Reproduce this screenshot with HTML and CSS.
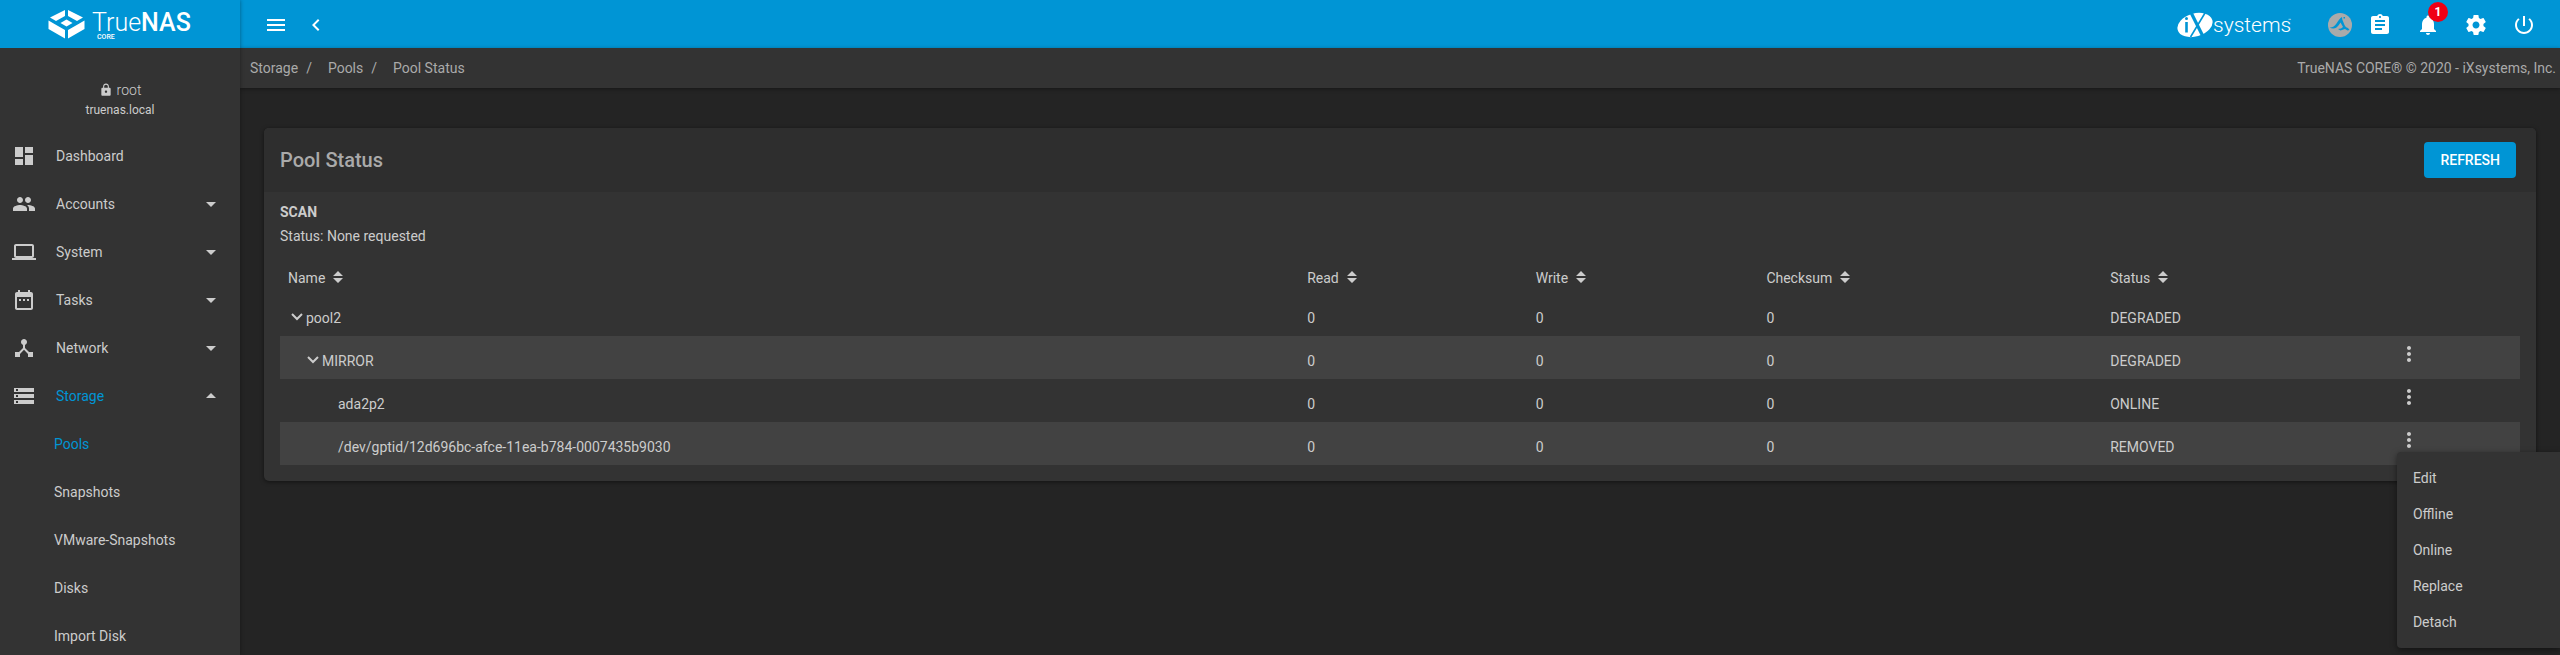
FILE: index.html
```html
<!DOCTYPE html>
<html lang="en">
<head>
<meta charset="utf-8">
<title>TrueNAS - Pool Status</title>
<link rel="stylesheet" href="styles.css">
</head>
<body>
<div class="shell">
  <aside class="sidebar">
    <a class="brand" href="#" aria-label="TrueNAS CORE">
      <svg class="brand-logo" viewBox="0 0 144 36" aria-hidden="true">
        <g fill="#fff">
          <path d="M17 4v6l-9 5-6-3.500z"/>
          <path d="M20 4v6l9 5 6-3.500z"/>
          <path d="M18.500 13.500l6 3.500-6 3.500-6-3.500z"/>
          <path d="M0.500 14.500l6 3.500 10.500 6v8.500l-16.500-9.500z"/>
          <path d="M36.500 14.500l-6 3.500-10.500 6v8.500l16.500-9.500z"/>
        </g>
        <text class="brand-name" x="44" y="25">True<tspan class="brand-strong">NAS</tspan></text>
        <text class="brand-edition" x="49" y="33">CORE</text>
      </svg>
    </a>
    <div class="user">
      <div class="user-name"><svg class="lock" viewBox="0 0 24 24"><path d="M18 8h-1V6c0-2.760-2.240-5-5-5S7 3.240 7 6v2H6c-1.100 0-2 .9-2 2v10c0 1.100.9 2 2 2h12c1.100 0 2-.9 2-2V10c0-1.100-.9-2-2-2zm-6 9c-1.100 0-2-.9-2-2s.9-2 2-2 2 .9 2 2-.9 2-2 2zm3.100-9H8.900V6c0-1.710 1.390-3.100 3.100-3.100s3.100 1.390 3.100 3.100z"/></svg>root</div>
      <div class="user-host">truenas.local</div>
    </div>
    <nav class="nav">
      <a class="nav-item" href="#"><svg class="icon" viewBox="0 0 24 24"><path d="M3 13h8V3H3zm0 8h8v-6H3zm10 0h8V11h-8zm0-18v6h8V3z"/></svg><span class="nav-label">Dashboard</span></a>
      <a class="nav-item" href="#"><svg class="icon" viewBox="0 0 24 24"><path d="M16 11c1.660 0 2.990-1.340 2.990-3S17.660 5 16 5s-3 1.340-3 3 1.340 3 3 3zm-8 0c1.660 0 2.990-1.340 2.990-3S9.660 5 8 5 5 6.340 5 8s1.340 3 3 3zm0 2c-2.330 0-7 1.170-7 3.500V19h14v-2.500C15 14.170 10.330 13 8 13zm8 0c-.29 0-.62.02-.97.05 1.160.84 1.970 1.970 1.970 3.450V19h6v-2.500c0-2.330-4.670-3.500-7-3.500z"/></svg><span class="nav-label">Accounts</span><svg class="icon" viewBox="0 0 24 24"><path d="M7 10l5 5 5-5z"/></svg></a>
      <a class="nav-item" href="#"><svg class="icon" viewBox="0 0 24 24"><path d="M20 18c1.100 0 1.990-.9 1.990-2L22 6c0-1.100-.9-2-2-2H4c-1.100 0-2 .9-2 2v10c0 1.100.9 2 2 2H0v2h24v-2zM4 6h16v10H4z"/></svg><span class="nav-label">System</span><svg class="icon" viewBox="0 0 24 24"><path d="M7 10l5 5 5-5z"/></svg></a>
      <a class="nav-item" href="#"><svg class="icon" viewBox="0 0 24 24"><path d="M9 11H7v2h2zm4 0h-2v2h2zm4 0h-2v2h2zm2-7h-1V2h-2v2H8V2H6v2H5c-1.110 0-1.990.9-1.990 2L3 20c0 1.100.89 2 2 2h14c1.100 0 2-.9 2-2V6c0-1.100-.9-2-2-2zm0 16H5V9h14z"/></svg><span class="nav-label">Tasks</span><svg class="icon" viewBox="0 0 24 24"><path d="M7 10l5 5 5-5z"/></svg></a>
      <a class="nav-item" href="#"><svg class="icon" viewBox="0 0 24 24"><path d="M17 16l-4-4V8.820C14.160 8.400 15 7.300 15 6c0-1.660-1.340-3-3-3S9 4.340 9 6c0 1.300.84 2.400 2 2.820V12l-4 4H3v5h5v-3.050l4-4.200 4 4.200V21h5v-5z"/></svg><span class="nav-label">Network</span><svg class="icon" viewBox="0 0 24 24"><path d="M7 10l5 5 5-5z"/></svg></a>
      <a class="nav-item" href="#"><svg class="icon" viewBox="0 0 24 24"><path d="M2 20h20v-4H2zm2-3h2v2H4zM2 4v4h20V4zm4 3H4V5h2zm-4 7h20v-4H2zm2-3h2v2H4z"/></svg><span class="nav-label active">Storage</span><svg class="icon" viewBox="0 0 24 24"><path d="M7 14l5-5 5 5z"/></svg></a>
      <a class="nav-sub active" href="#">Pools</a>
      <a class="nav-sub" href="#">Snapshots</a>
      <a class="nav-sub" href="#">VMware-Snapshots</a>
      <a class="nav-sub" href="#">Disks</a>
      <a class="nav-sub" href="#">Import Disk</a>
    </nav>
  </aside>

  <div class="main">
    <header class="topbar">
      <div class="topbar-group">
        <button class="icon-btn" aria-label="Toggle menu"><svg class="icon" viewBox="0 0 24 24"><path d="M3 18h18v-2H3zm0-5h18v-2H3zm0-7v2h18V6z"/></svg></button>
        <button class="icon-btn" aria-label="Collapse menu"><svg class="icon" viewBox="0 0 24 24"><path d="M15.410 7.410L14 6l-6 6 6 6 1.410-1.410L10.830 12z"/></svg></button>
      </div>
      <div class="topbar-group topbar-end">
        <svg class="vendor" viewBox="0 0 120 32" role="img" aria-label="iXsystems">
          <ellipse cx="19" cy="16" rx="18" ry="11.500" fill="#fff" transform="rotate(-16 19 16)"/>
          <g fill="none" stroke="#0095d5">
            <path d="M10.500 13v10.500" stroke-width="2.600"/>
            <path d="M15.500 4.500L27 27.500" stroke-width="3.200"/>
            <path d="M29 4L14.500 28" stroke-width="1.600"/>
          </g>
          <circle cx="10.500" cy="9.500" r="1.500" fill="#0095d5"/>
          <text class="vendor-name" x="37" y="23">systems</text>
          <text class="vendor-tm" x="112" y="13">™</text>
        </svg>
        <button class="icon-btn truecommand" aria-label="TrueCommand"><svg class="icon" viewBox="0 0 24 24"><circle cx="12" cy="12" r="12" fill="#aaa"/><path d="M1.500 14.500c3 .2 5-1 7-4 1.500-2.500 3-5 5.500-6.500l.3 2.500 2 5c.8 2 1.600 2.800 3.700 3.500l1.500 2-2 .6-2.500-1.600-4.500 1.500-2.500-1.500 3-.6 2-1.400-2.500-4.500c-1.500 2-2 3.500-4 5-2 1.400-4.500 1.400-7 0zM15.500 4h1.500v1.500h-1.500z" fill="#0095d5"/></svg></button>
        <button class="icon-btn tasks" aria-label="Task manager"><svg class="icon" viewBox="0 0 24 24"><path d="M19 3h-4.180C14.400 1.840 13.300 1 12 1s-2.400.84-2.820 2H5c-1.100 0-2 .9-2 2v14c0 1.100.9 2 2 2h14c1.100 0 2-.9 2-2V5c0-1.100-.9-2-2-2zm-7 0c.55 0 1 .45 1 1s-.45 1-1 1-1-.45-1-1 .45-1 1-1zm2 14H7v-2h7zm3-4H7v-2h10zm0-4H7V7h10z"/></svg></button>
        <button class="icon-btn" aria-label="Notifications, 1 new"><svg class="icon" viewBox="0 0 24 24"><path d="M12 22c1.100 0 2-.9 2-2h-4c0 1.100.89 2 2 2zm6-6v-5c0-3.070-1.640-5.640-4.500-6.320V4c0-.83-.67-1.500-1.500-1.500s-1.500.67-1.500 1.500v.68C7.630 5.360 6 7.920 6 11v5l-2 2v1h16v-1z"/></svg><span class="badge">1</span></button>
        <button class="icon-btn" aria-label="Settings"><svg class="icon" viewBox="0 0 24 24"><path d="M19.430 12.980c.04-.32.07-.64.07-.98s-.03-.66-.07-.98l2.110-1.650c.19-.15.24-.42.12-.64l-2-3.460c-.12-.22-.39-.3-.61-.22l-2.490 1c-.52-.4-1.080-.73-1.690-.98l-.38-2.650C14.460 2.180 14.250 2 14 2h-4c-.25 0-.46.18-.49.42l-.38 2.650c-.61.25-1.170.59-1.690.98l-2.490-1c-.23-.09-.49 0-.61.22l-2 3.460c-.13.22-.07.49.12.64l2.110 1.650c-.04.32-.07.65-.07.98s.03.66.07.98l-2.110 1.650c-.19.15-.24.42-.12.64l2 3.460c.12.22.39.3.61.22l2.490-1c.52.4 1.080.73 1.690.98l.38 2.650c.03.24.24.42.49.42h4c.25 0 .46-.18.49-.42l.38-2.650c.61-.25 1.170-.59 1.690-.98l2.490 1c.23.09.49 0 .61-.22l2-3.460c.12-.22.07-.49-.12-.64zM12 15.500c-1.930 0-3.500-1.570-3.500-3.500s1.570-3.500 3.500-3.500 3.500 1.570 3.500 3.500-1.570 3.500-3.500 3.500z"/></svg></button>
        <button class="icon-btn" aria-label="Power"><svg class="icon" viewBox="0 0 24 24"><path d="M13 3h-2v10h2zm4.830 2.170l-1.420 1.420C17.990 7.860 19 9.810 19 12c0 3.870-3.130 7-7 7s-7-3.130-7-7c0-2.190 1.010-4.140 2.580-5.420L6.170 5.170C4.230 6.820 3 9.260 3 12c0 4.970 4.030 9 9 9s9-4.030 9-9c0-2.740-1.230-5.180-3.170-6.830z"/></svg></button>
      </div>
    </header>

    <div class="crumbbar">
      <nav class="crumbs" aria-label="Breadcrumb">
        <a href="#">Storage</a><span class="sep">/</span>
        <a href="#">Pools</a><span class="sep">/</span>
        <a href="#">Pool Status</a>
      </nav>
      <div>TrueNAS CORE® © 2020 - iXsystems, Inc.</div>
    </div>

    <main class="content">
      <section class="card">
        <div class="card-head">
          <h1 class="card-title">Pool Status</h1>
          <button class="refresh">REFRESH</button>
        </div>
        <div class="card-body">
          <div class="scan-title">SCAN</div>
          <div class="scan-status">Status: None requested</div>
          <table class="pool-table">
            <colgroup><col class="c-name"><col class="c-read"><col class="c-write"><col class="c-sum"><col class="c-status"><col></colgroup>
            <thead>
              <tr>
                <th><button class="sort">Name<svg viewBox="0 0 10 12"><path d="M5 0l5 5H0zM0 7h10l-5 5z"/></svg></button></th>
                <th><button class="sort">Read<svg viewBox="0 0 10 12"><path d="M5 0l5 5H0zM0 7h10l-5 5z"/></svg></button></th>
                <th><button class="sort">Write<svg viewBox="0 0 10 12"><path d="M5 0l5 5H0zM0 7h10l-5 5z"/></svg></button></th>
                <th><button class="sort">Checksum<svg viewBox="0 0 10 12"><path d="M5 0l5 5H0zM0 7h10l-5 5z"/></svg></button></th>
                <th><button class="sort">Status<svg viewBox="0 0 10 12"><path d="M5 0l5 5H0zM0 7h10l-5 5z"/></svg></button></th>
                <th></th>
              </tr>
            </thead>
            <tbody>
              <tr>
                <td><div class="node"><button class="toggle" aria-label="Collapse pool2"><svg viewBox="0 0 12 8"><path d="M1 1l5 5 5-5"/></svg></button>pool2</div></td>
                <td>0</td><td>0</td><td>0</td><td>DEGRADED</td><td></td>
              </tr>
              <tr>
                <td><div class="node level-1"><button class="toggle" aria-label="Collapse MIRROR"><svg viewBox="0 0 12 8"><path d="M1 1l5 5 5-5"/></svg></button>MIRROR</div></td>
                <td>0</td><td>0</td><td>0</td><td>DEGRADED</td>
                <td class="actions"><button class="more" aria-label="MIRROR actions"><svg class="icon" viewBox="0 0 24 24"><path d="M12 8c1.100 0 2-.9 2-2s-.9-2-2-2-2 .9-2 2 .9 2 2 2zm0 2c-1.100 0-2 .9-2 2s.9 2 2 2 2-.9 2-2-.9-2-2-2zm0 6c-1.100 0-2 .9-2 2s.9 2 2 2 2-.9 2-2-.9-2-2-2z"/></svg></button></td>
              </tr>
              <tr>
                <td><div class="node level-2">ada2p2</div></td>
                <td>0</td><td>0</td><td>0</td><td>ONLINE</td>
                <td class="actions"><button class="more" aria-label="ada2p2 actions"><svg class="icon" viewBox="0 0 24 24"><path d="M12 8c1.100 0 2-.9 2-2s-.9-2-2-2-2 .9-2 2 .9 2 2 2zm0 2c-1.100 0-2 .9-2 2s.9 2 2 2 2-.9 2-2-.9-2-2-2zm0 6c-1.100 0-2 .9-2 2s.9 2 2 2 2-.9 2-2-.9-2-2-2z"/></svg></button></td>
              </tr>
              <tr>
                <td><div class="node level-2">/dev/gptid/12d696bc-afce-11ea-b784-0007435b9030</div></td>
                <td>0</td><td>0</td><td>0</td><td>REMOVED</td>
                <td class="actions"><button class="more" aria-label="Disk actions" aria-expanded="true"><svg class="icon" viewBox="0 0 24 24"><path d="M12 8c1.100 0 2-.9 2-2s-.9-2-2-2-2 .9-2 2 .9 2 2 2zm0 2c-1.100 0-2 .9-2 2s.9 2 2 2 2-.9 2-2-.9-2-2-2zm0 6c-1.100 0-2 .9-2 2s.9 2 2 2 2-.9 2-2-.9-2-2-2z"/></svg></button>
                  <div class="menu" role="menu">
                    <button class="menu-item" role="menuitem">Edit</button>
                    <button class="menu-item" role="menuitem">Offline</button>
                    <button class="menu-item" role="menuitem">Online</button>
                    <button class="menu-item" role="menuitem">Replace</button>
                    <button class="menu-item" role="menuitem">Detach</button>
                  </div>
                </td>
              </tr>
            </tbody>
          </table>
        </div>
      </section>
    </main>
  </div>
</div>
</body>
</html>
```

FILE: styles.css
```css
:root {
  --primary: #0095d5;
  --bg: #242424;
  --panel: #333;
  --panel-head: #2e2e2e;
  --row-alt: #424242;
  --text: #ccc;
  --muted: #aaa;
}

* { box-sizing: border-box; }

body {
  margin: 0;
  overflow: hidden;
  background: var(--bg);
  color: var(--text);
  font: 14px/24px Roboto, "Liberation Sans", sans-serif;
}

a { color: inherit; text-decoration: none; }

button {
  padding: 0;
  border: 0;
  background: none;
  color: inherit;
  font: inherit;
  cursor: pointer;
}

.icon {
  display: block;
  flex: none;
  width: 24px;
  height: 24px;
  fill: currentColor;
}

.shell {
  display: grid;
  grid-template-columns: 240px minmax(0, 1fr);
  height: 100vh;
}

/* Sidebar */
.sidebar {
  z-index: 1;
  overflow: hidden;
  background: var(--panel);
  box-shadow: 0 0 4px rgba(0, 0, 0, .4);
}

.brand {
  display: flex;
  align-items: center;
  justify-content: center;
  height: 48px;
  background: var(--primary);
}

.brand-logo { width: 144px; height: 36px; }
.brand-name { fill: #fff; font-size: 25px; font-weight: 300; }
.brand-strong { font-weight: 500; }
.brand-edition { fill: #fff; font-size: 7px; font-weight: 500; }

.user {
  height: 84px;
  padding-top: 32px;
  text-align: center;
}

.user-name {
  display: flex;
  align-items: center;
  justify-content: center;
  gap: 4px;
  height: 20px;
  font-weight: 300;
}

.user-host { font-size: 12px; line-height: 20px; }
.lock { width: 14px; height: 14px; fill: currentColor; }

.nav-item {
  display: flex;
  align-items: center;
  gap: 20px;
  height: 48px;
  padding: 0 17px 0 12px;
}

.nav-label { flex: 1; }

.nav-sub {
  display: block;
  padding-left: 54px;
  line-height: 48px;
}

.active { color: var(--primary); }

/* Top bar */
.topbar {
  display: flex;
  align-items: center;
  justify-content: space-between;
  height: 48px;
  padding: 2px 24px 0;
  background: var(--primary);
  color: #fff;
}

.topbar-group { display: flex; align-items: center; gap: 16px; }
.topbar-end { gap: 24px; }
.icon-btn { position: relative; }
.tasks { margin-left: -8px; }
.vendor { width: 120px; height: 32px; margin-right: 8px; }
.vendor-name { fill: #fff; font-size: 21px; font-weight: 300; }
.vendor-tm { fill: #fff; font-size: 5px; }

.badge {
  position: absolute;
  top: -11px;
  right: -8px;
  width: 20px;
  border-radius: 50%;
  background: #f00014;
  font-size: 12px;
  font-weight: 700;
  line-height: 20px;
}

.crumbbar {
  display: flex;
  align-items: center;
  justify-content: space-between;
  height: 40px;
  padding: 0 4px 0 10px;
  background: var(--panel);
  color: var(--muted);
  box-shadow: 0 1px 4px rgba(0, 0, 0, .4);
}

.crumbs { display: flex; }
.sep { padding: 0 16px 0 8px; }

/* Card */
.content { padding: 40px 24px; }

.card {
  border-radius: 5px;
  background: var(--panel);
  box-shadow: 0 1px 4px rgba(0, 0, 0, .5);
}

.card-head {
  display: flex;
  align-items: center;
  justify-content: space-between;
  height: 64px;
  padding: 0 20px 0 16px;
  border-radius: 5px 5px 0 0;
  background: var(--panel-head);
}

.card-title {
  margin: 0;
  color: var(--muted);
  font-size: 20px;
  font-weight: 500;
}

.refresh {
  height: 36px;
  padding: 0 16px;
  border-radius: 4px;
  background: var(--primary);
  color: #fff;
  font-weight: 500;
}

.card-body { padding: 8px 16px 16px; }
.scan-title { font-weight: 700; }

.pool-table {
  width: 100%;
  border-collapse: collapse;
  table-layout: fixed;
  line-height: 22px;
}

.c-name { width: 45.5%; }
.c-read { width: 10.2%; }
.c-write { width: 10.3%; }
.c-sum { width: 15.35%; }
.c-status { width: 12.8%; }

.pool-table th {
  padding: 19px 8px 4px;
  font-weight: 400;
  text-align: left;
}

.pool-table td {
  padding: 14px 8px 7px;
  vertical-align: top;
}

.pool-table tbody tr:nth-child(even) { background: var(--row-alt); }

.sort { display: flex; align-items: center; gap: 8px; }
.sort svg { width: 10px; height: 12px; margin-bottom: 2px; fill: currentColor; }

.node { display: flex; align-items: center; }
.level-1 { padding-left: 16px; }
.level-2 { padding-left: 50px; }

.toggle {
  display: flex;
  justify-content: center;
  width: 18px;
  padding-bottom: 2px;
}

.toggle svg {
  width: 12px;
  height: 8px;
  fill: none;
  stroke: currentColor;
  stroke-width: 2;
}

.pool-table .actions { position: relative; padding: 6px 8px 0; }
.more { display: block; }

.menu {
  position: absolute;
  z-index: 2;
  top: 30px;
  left: 8px;
  width: 163px;
  padding: 8px 0;
  border-radius: 4px 0 0 4px;
  background: var(--panel);
  box-shadow: 0 2px 6px rgba(0, 0, 0, .5);
}

.menu-item {
  display: block;
  width: 100%;
  padding: 0 16px;
  line-height: 36px;
  text-align: left;
}
```
